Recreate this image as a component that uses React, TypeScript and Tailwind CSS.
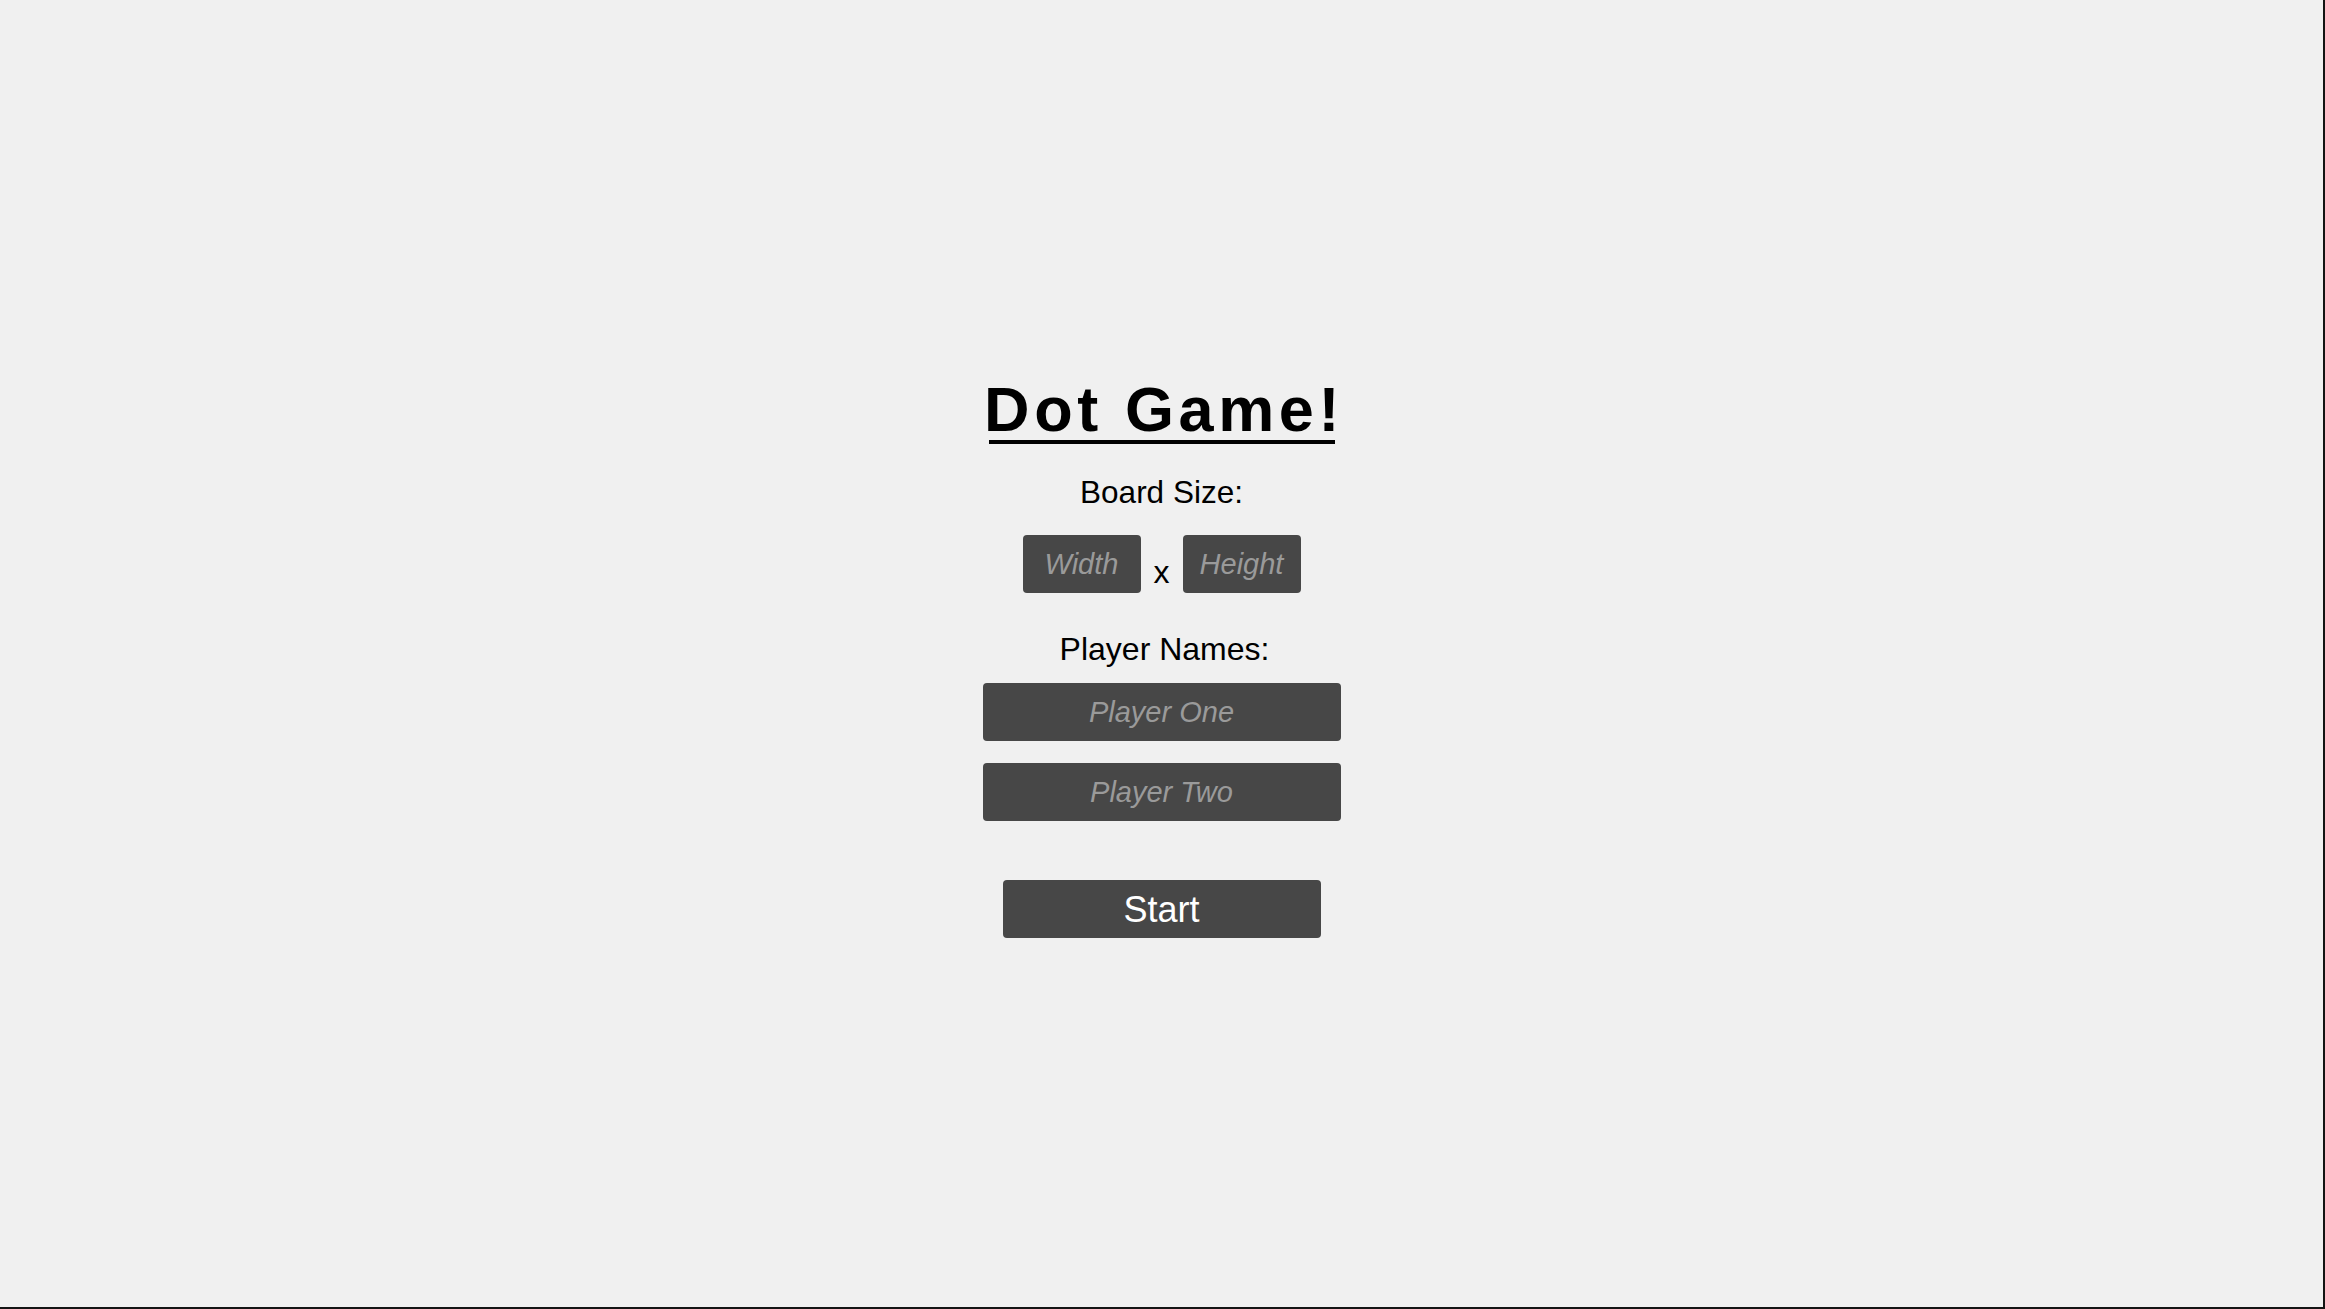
import { useState } from "react";

const boxClass =
  "h-[58px] rounded-[4px] bg-[#474747] pt-[2px] text-center text-[29px] text-white outline-none placeholder:italic placeholder:text-[#9a9a9a]";

export default function App() {
  const [width, setWidth] = useState("");
  const [height, setHeight] = useState("");
  const [p1, setP1] = useState("");
  const [p2, setP2] = useState("");

  return (
    <div
      className="box-border flex h-screen w-full flex-col items-center border-r-2 border-b-2 border-[#141414] bg-[#f0f0f0] pt-[381px] text-black"
      style={{ fontFamily: '"Liberation Sans", Arial, sans-serif' }}
    >
      <div className="flex flex-col items-center">
        <h1 className="pl-[5px] text-[63px] leading-[56px] font-bold tracking-[4.6px]">Dot Game!</h1>
        <div className="mt-[3px] h-[4px] w-[346px] bg-black" />
      </div>

      <div className="mt-[33px] text-[31.5px] leading-none">Board Size:</div>

      <div className="mt-[26px] flex items-end">
        <input
          className={`${boxClass} w-[118px]`}
          placeholder="Width"
          value={width}
          onChange={(e) => setWidth(e.target.value)}
        />
        <span className="mx-[13px] mb-[5px] text-[32px] leading-none">x</span>
        <input
          className={`${boxClass} w-[118px]`}
          placeholder="Height"
          value={height}
          onChange={(e) => setHeight(e.target.value)}
        />
      </div>

      <div className="mt-[40px] pl-[6px] text-[32px] leading-none">Player Names:</div>

      <input
        className={`${boxClass} mt-[18px] w-[358px]`}
        placeholder="Player One"
        value={p1}
        onChange={(e) => setP1(e.target.value)}
      />
      <input
        className={`${boxClass} mt-[22px] w-[358px]`}
        placeholder="Player Two"
        value={p2}
        onChange={(e) => setP2(e.target.value)}
      />

      <button
        type="button"
        className="mt-[59px] h-[58px] w-[318px] rounded-[4px] bg-[#474747] pt-[3px] text-[36px] leading-none text-white"
      >
        Start
      </button>
    </div>
  );
}
